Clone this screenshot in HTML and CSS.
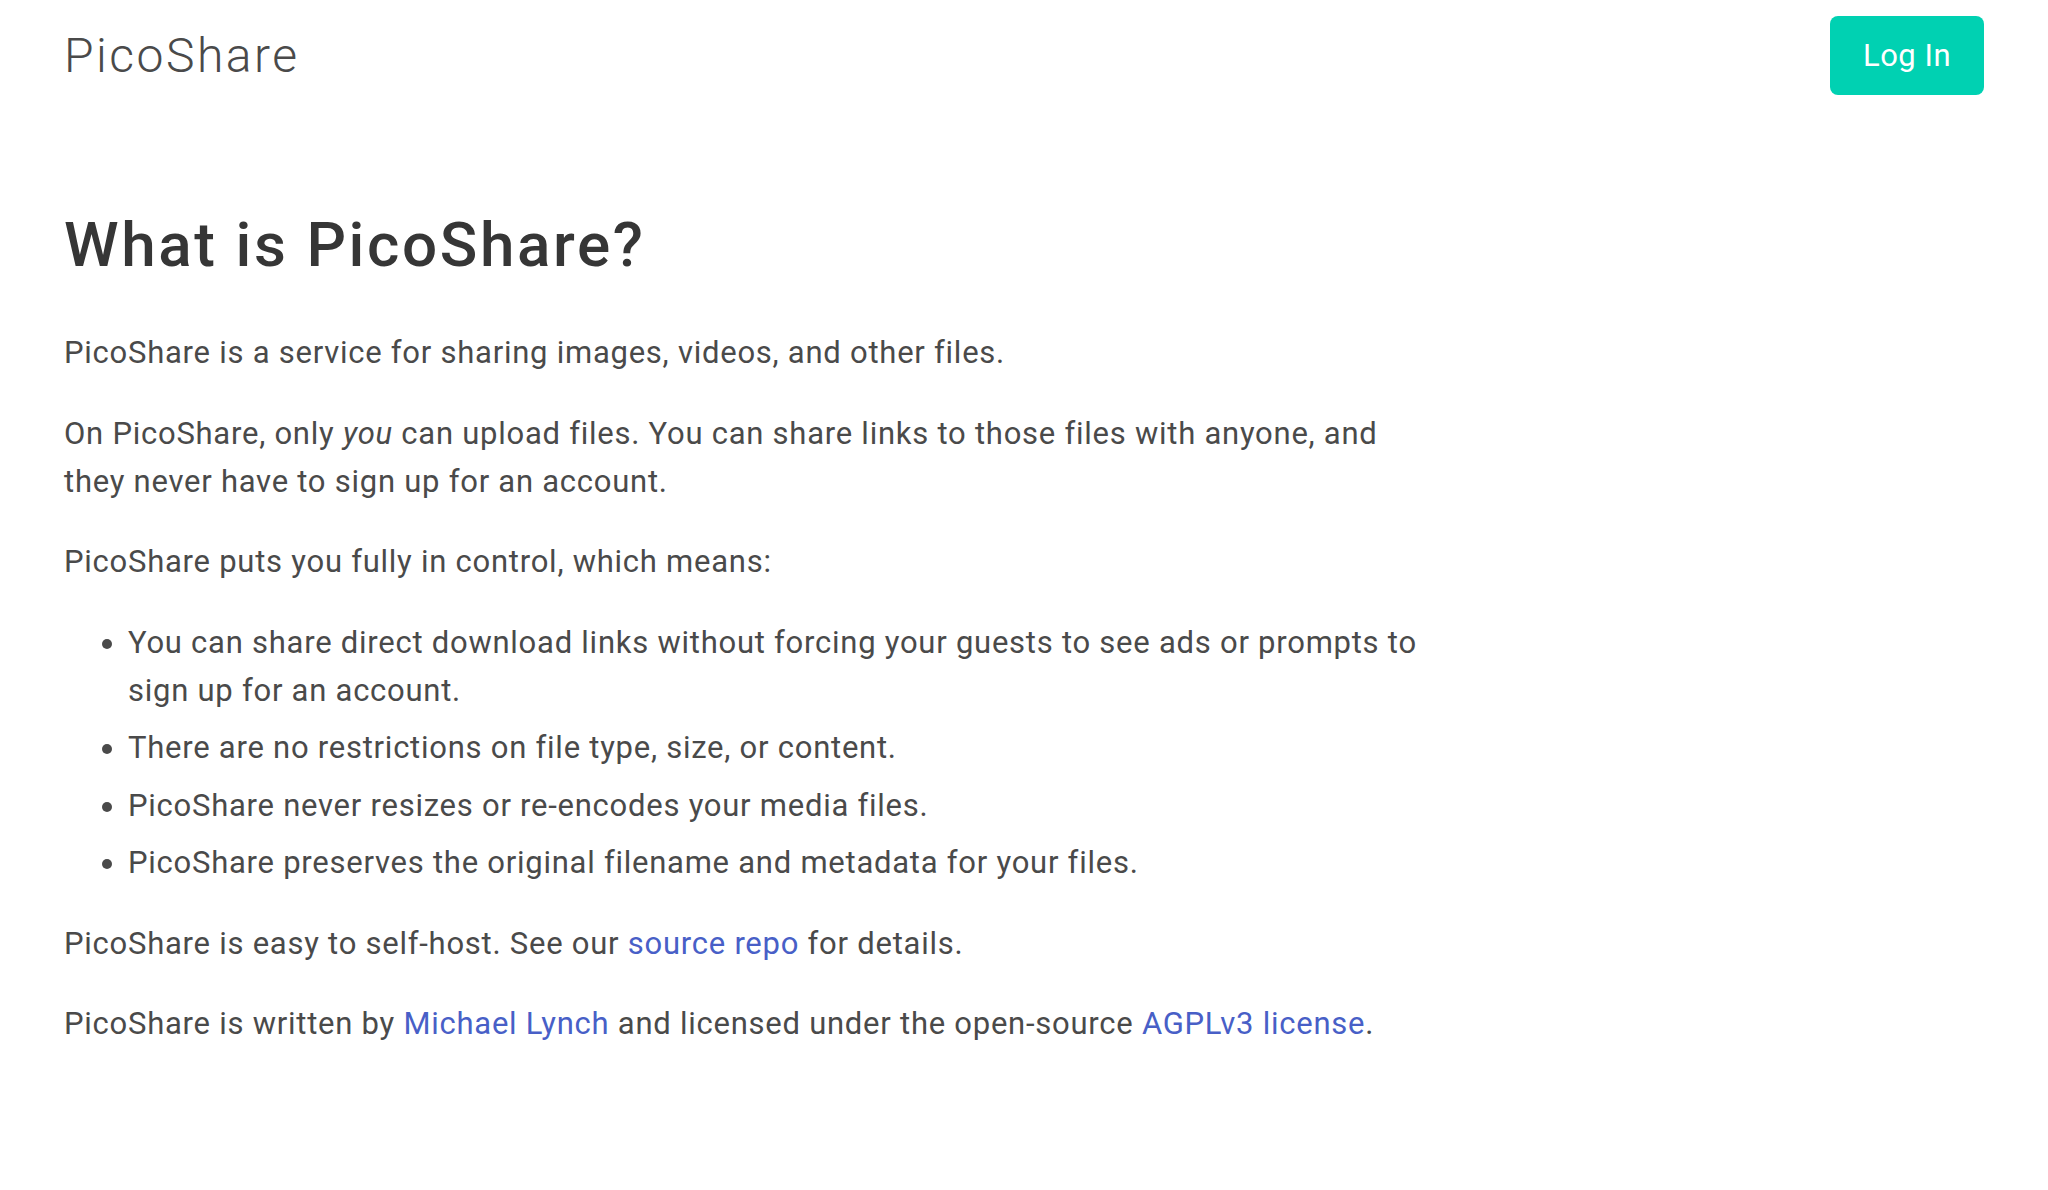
FILE: index.html
```html
<!DOCTYPE html>
<html lang="en">

<head>
    <meta charset="UTF-8">
    <meta name="viewport" content="width=device-width, initial-scale=1.0">
    <title>PicoShare</title>
    <link rel="stylesheet" href="styles.css">
</head>

<body>
    <nav class="navbar">
        <a class="brand" href="#">PicoShare</a>
        <a class="button" href="#">Log In</a>
    </nav>

    <main class="content">
        <h1>What is PicoShare?</h1>

        <p>PicoShare is a service for sharing images, videos, and other files.</p>

        <p>On PicoShare, only <em>you</em> can upload files. You can share links to those files with anyone, and
            they never have to sign up for an account.</p>

        <p>PicoShare puts you fully in control, which means:</p>

        <ul>
            <li>You can share direct download links without forcing your guests to see ads or prompts to sign up for an account.</li>
            <li>There are no restrictions on file type, size, or content.</li>
            <li>PicoShare never resizes or re-encodes your media files.</li>
            <li>PicoShare preserves the original filename and metadata for your files.</li>
        </ul>

        <p>PicoShare is easy to self-host. See our <a href="#">source repo</a> for details.</p>

        <p>PicoShare is written by <a href="#">Michael Lynch</a> and licensed under the open-source <a href="#">AGPLv3 license</a>.</p>
    </main>
</body>

</html>
```

FILE: styles.css
```css
body {
    margin: 0;
    font-family: Roboto, "Liberation Sans", sans-serif;
    color: #4a4a4a;
    background-color: #fff;
}

.navbar {
    display: flex;
    justify-content: space-between;
    align-items: center;
    padding: 16px 64px;
}

.brand {
    font-size: 48px;
    font-weight: 300;
    letter-spacing: 2.5px;
    color: #4a4a4a;
    text-decoration: none;
}

.button {
    display: flex;
    align-items: center;
    justify-content: center;
    width: 154px;
    height: 79px;
    box-sizing: border-box;
    background-color: #00d1b2;
    color: #fff;
    font-size: 31px;
    letter-spacing: 0.5px;
    border-radius: 8px;
    text-decoration: none;
}

.content {
    padding: 101px 64px 0;
    max-width: 1370px;
    font-size: 31px;
    line-height: 48px;
    letter-spacing: 0.75px;
}

h1 {
    margin: 0 0 52px;
    font-size: 62px;
    line-height: 65px;
    font-weight: 500;
    letter-spacing: 2.6px;
    color: #363636;
}

p {
    margin: 0 0 32.5px;
}

ul {
    margin: 0 0 32.5px;
    padding-left: 64px;
    list-style: disc outside;
}

li + li {
    margin-top: 9.5px;
}

a {
    color: #485fc7;
    text-decoration: none;
}
```
